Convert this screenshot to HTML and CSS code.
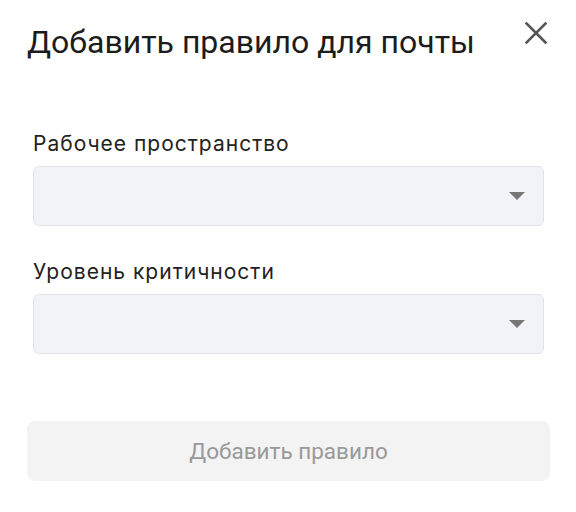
FILE: index.html
```html
<!DOCTYPE html>
<html>
<head>
    <meta charset="utf-8">
    <title>Добавить правило для почты</title>
    <link rel="stylesheet" href="styles.css">
</head>
<body>
    <div class="dialog">
        <div class="header">
            <h1>Добавить правило для почты</h1>
            <button class="close" type="button" aria-label="Закрыть">
                <svg width="22" height="22" viewBox="0 0 22 22"><path d="M1.5 1.5L20.5 20.5M20.5 1.5L1.5 20.5" stroke="#555" stroke-width="2.6" stroke-linecap="square"/></svg>
            </button>
        </div>
        <div class="fields">
            <div class="field">
                <label>Рабочее пространство</label>
                <div class="select"><span class="arrow"></span></div>
            </div>
            <div class="field">
                <label>Уровень критичности</label>
                <div class="select"><span class="arrow"></span></div>
            </div>
        </div>
        <button class="submit" type="button" disabled>Добавить правило</button>
    </div>
</body>
</html>
```

FILE: styles.css
```css
body{
    margin:0;
    background:#fff;
    font-family:Roboto, "Liberation Sans", sans-serif;
}
.dialog{
    width:576px;
    padding:20px 26px 0 27px;
    box-sizing:border-box;
}
.header{
    display:flex;
    justify-content:space-between;
    align-items:flex-start;
}
h1{
    margin:0;
    font-size:32px;
    font-weight:400;
    color:#1c1c1c;
    line-height:44px;
}
.close{
    border:0;
    background:none;
    padding:0;
    margin:2px 3px 0 0;
    cursor:pointer;
}
.fields{
    padding:68px 6px 0 6px;
    display:flex;
    flex-direction:column;
    gap:34px;
}
.field label{
    display:block;
    font-family:Inter, "Noto Sans", sans-serif;
    font-size:21px;
    letter-spacing:1px;
    color:#222;
    line-height:24px;
    margin-bottom:10px;
}
.select{
    height:58px;
    background:#f1f3f8;
    border:1px solid #e2e4e8;
    border-radius:6px;
    position:relative;
}
.arrow{
    position:absolute;
    right:18px;
    top:25px;
    width:0;
    height:0;
    border-left:8px solid transparent;
    border-right:8px solid transparent;
    border-top:8px solid #777;
}
.submit{
    display:block;
    width:523px;
    height:60px;
    margin-top:67px;
    border:0;
    border-radius:8px;
    background:#f3f3f3;
    color:#999;
    font-family:Roboto, "Liberation Sans", sans-serif;
    font-size:22.5px;
}
```
